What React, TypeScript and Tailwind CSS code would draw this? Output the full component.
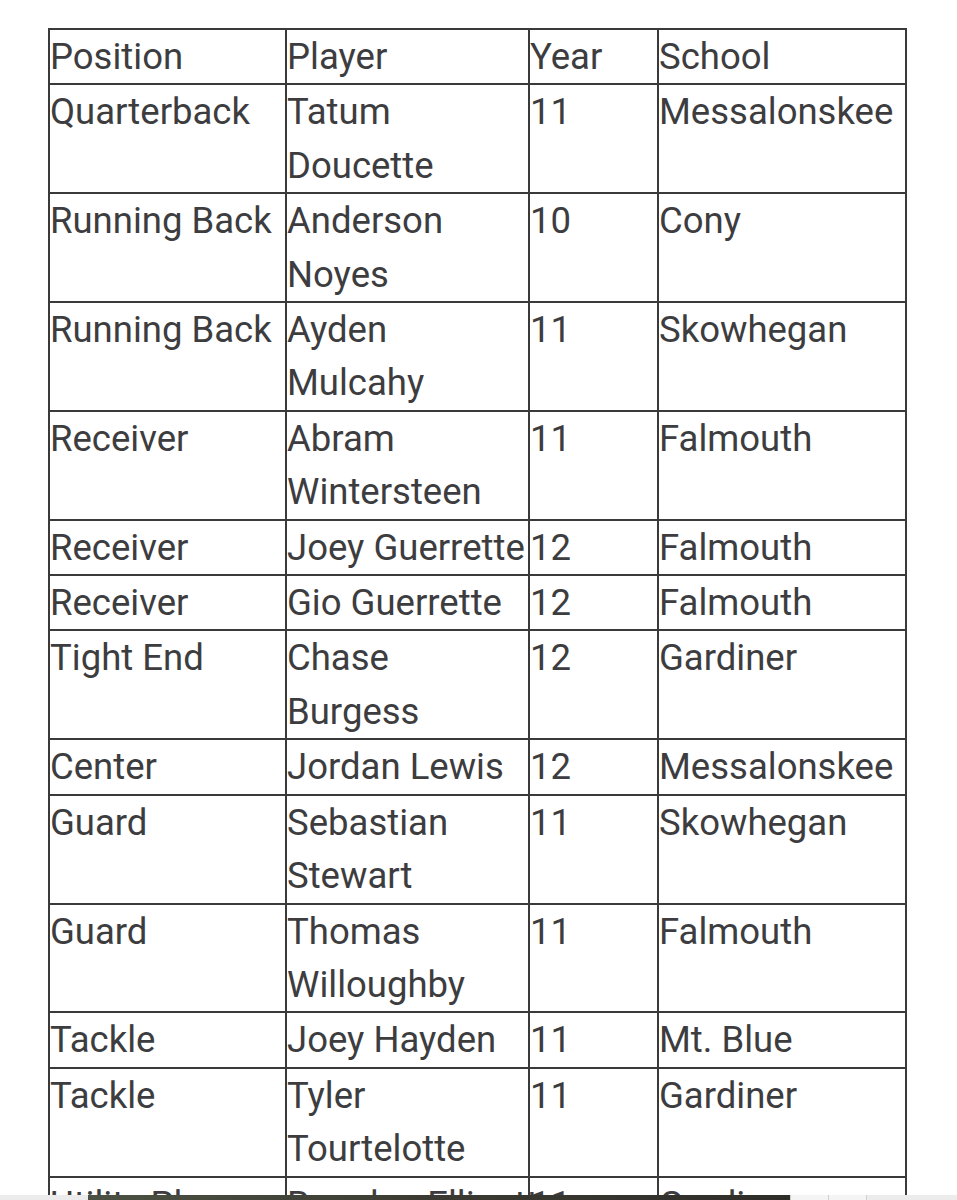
import React from "react";

type Row = [string, string, string, string];

const rows: Row[] = [
  ["Quarterback", "Tatum Doucette", "11", "Messalonskee"],
  ["Running Back", "Anderson Noyes", "10", "Cony"],
  ["Running Back", "Ayden Mulcahy", "11", "Skowhegan"],
  ["Receiver", "Abram Wintersteen", "11", "Falmouth"],
  ["Receiver", "Joey Guerrette", "12", "Falmouth"],
  ["Receiver", "Gio Guerrette", "12", "Falmouth"],
  ["Tight End", "Chase Burgess", "12", "Gardiner"],
  ["Center", "Jordan Lewis", "12", "Messalonskee"],
  ["Guard", "Sebastian Stewart", "11", "Skowhegan"],
  ["Guard", "Thomas Willoughby", "11", "Falmouth"],
  ["Tackle", "Joey Hayden", "11", "Mt. Blue"],
  ["Tackle", "Tyler Tourtelotte", "11", "Gardiner"],
  ["Utility Player", "Brayden Ellicott", "11", "Gardiner"],
];

const cell = "border border-[#3a3a3a] p-0 align-top text-left font-normal";

export default function App() {
  return (
    <div
      className="relative min-h-[1200px] bg-white text-[#3d3d3f] overflow-hidden"
      style={{ fontFamily: "Roboto, 'Noto Sans', sans-serif" }}
    >
      <div className="pt-[28px] pl-[48px]">
        <table className="table-fixed w-[859px] border border-[#3a3a3a] border-separate border-spacing-0 text-[36.5px] leading-[53.4px]">
          <colgroup>
            <col className="w-[237px]" />
            <col className="w-[243px]" />
            <col className="w-[129px]" />
            <col className="w-[248px]" />
          </colgroup>
          <thead>
            <tr>
              <th className={cell}>Position</th>
              <th className={cell}>Player</th>
              <th className={cell}>Year</th>
              <th className={cell}>School</th>
            </tr>
          </thead>
          <tbody>
            {rows.map((r, i) => {
              const last = i === rows.length - 1;
              return (
                <tr key={i}>
                  <td className={cell + (last ? " whitespace-nowrap" : "")}>{r[0]}</td>
                  <td className={cell + (last ? " whitespace-nowrap overflow-visible" : "")}>{r[1]}</td>
                  <td className={cell}>{r[2]}</td>
                  <td className={cell}>{r[3]}</td>
                </tr>
              );
            })}
          </tbody>
        </table>
      </div>

      <div className="absolute left-0 top-[1195px] w-full h-[5px] bg-[#ececec] flex">
        <div className="w-[88px]" />
        <div className="w-[702px] h-full bg-gradient-to-r from-[#4b5243] via-[#3b3a32] to-[#2e2d28]" />
        <div className="w-[38px] h-full bg-[#f4f4f4] border-l border-[#cfcfcf]" />
        <div className="w-[39px] h-full bg-[#f4f4f4] border-l border-r border-[#cfcfcf]" />
      </div>
    </div>
  );
}
